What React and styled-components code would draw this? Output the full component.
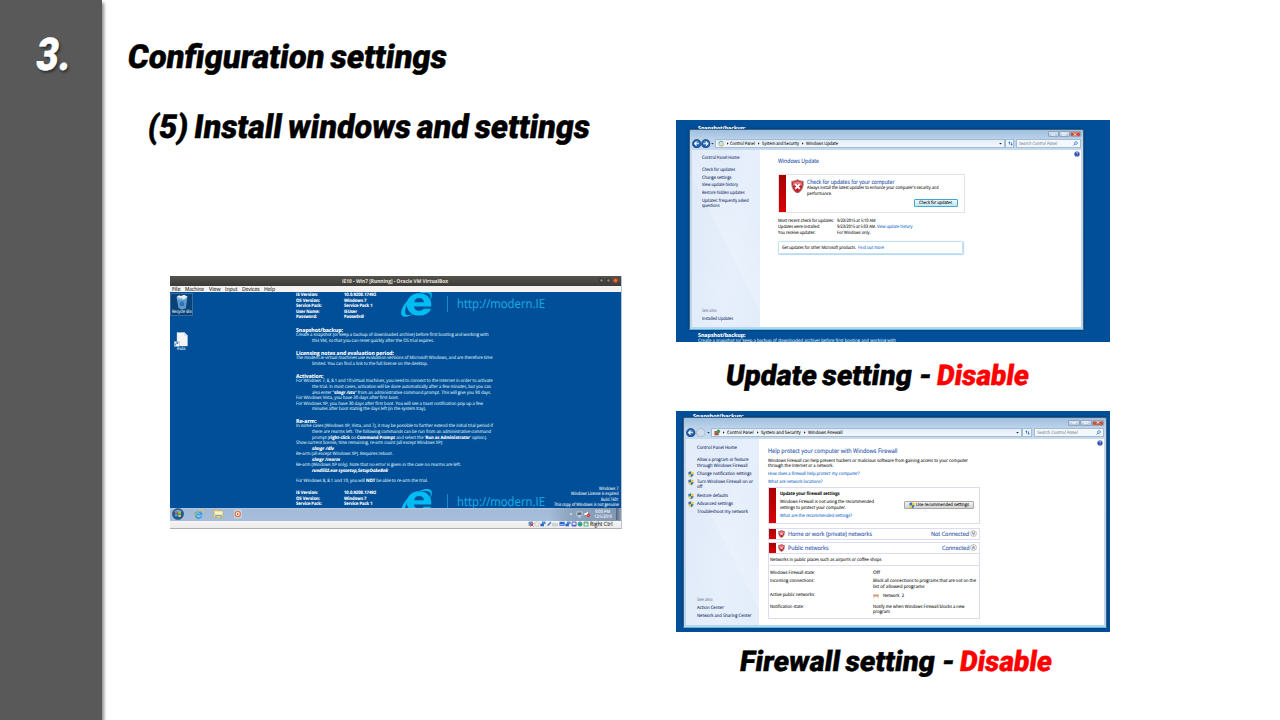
import React, { useLayoutEffect, useRef, useState } from "react";
import styled, { createGlobalStyle, css } from "styled-components";

const GlobalStyle = createGlobalStyle`
  *, *::before, *::after { box-sizing: border-box; }
  html, body { margin: 0; padding: 0; background: #fff; overflow: hidden; }
  svg { display: block; flex: none; }
`;

/* ---------- text fitted to a given width ---------- */

const FitBox = styled.span`
  display: block;
  flex: none;
  width: ${(p) => p.$w}px;
  margin-left: ${(p) => p.$ml || 0}px;
  white-space: nowrap;
  color: ${(p) => p.$color || "inherit"};
  font-weight: ${(p) => (p.$bold ? 700 : "inherit")};
  font-style: ${(p) => (p.$italic ? "italic" : "inherit")};
`;

const FitInner = styled.span`
  display: inline-block;
  transform-origin: 0 50%;
  white-space: pre;
`;

function Fit({ w, ml, color, bold, italic, skew = 0, children }) {
  const ref = useRef(null);
  const [scale, setScale] = useState(1);
  useLayoutEffect(() => {
    const el = ref.current;
    const before = el.style.transform;
    el.style.transform = "none";
    const natural = el.getBoundingClientRect().width;
    el.style.transform = before;
    if (natural > 0) setScale(w / natural);
  }, [w]);
  const slant = skew ? `skewX(${-skew}deg) ` : "";
  return (
    <FitBox $w={w} $ml={ml} $color={color} $bold={bold} $italic={italic}>
      <FitInner ref={ref} style={{ transform: `${slant}scaleX(${scale})` }}>
        {children}
      </FitInner>
    </FitBox>
  );
}

const Line = styled.div`
  display: flex;
  flex: none;
  align-items: center;
  height: 5.5px;
  line-height: 5.5px;
  margin-top: ${(p) => p.$gap || 0}px;
  padding-top: 1.6px;
  padding-left: ${(p) => p.$indent || 0}px;
  font-size: ${(p) => p.$size || 4.6}px;
  color: ${(p) => p.$color || "inherit"};
`;

/* ---------- slide ---------- */

const Slide = styled.div`
  display: flex;
  width: 1280px;
  height: 720px;
  overflow: hidden;
  background: #fff;
  font-family: "Open Sans", "Noto Sans", sans-serif;
  text-rendering: geometricPrecision;
  -webkit-text-stroke: 0.1px currentColor;
`;

const SideBand = styled.aside`
  flex: none;
  width: 102px;
  height: 720px;
  padding: 28px 0 0 37px;
  background: #595959;
  box-shadow: 2px 3px 3px rgba(0, 0, 0, 0.45);
`;

const display = css`
  font-family: Roboto, Inter, sans-serif;
  font-weight: 900;
  word-spacing: -0.06em;
  -webkit-text-stroke: 0.4px currentColor;
`;

const SlideNumber = styled.div`
  ${display}
  height: 53px;
  line-height: 53px;
  font-size: 45px;
  color: #fff;
  text-shadow: 2px 2px 3px rgba(0, 0, 0, 0.55);
`;

const Content = styled.main`
  display: flex;
  width: 1178px;
`;

const LeftColumn = styled.section`
  flex: none;
  width: 574px;
  padding: 38px 0 0 26px;
`;

const RightColumn = styled.section`
  display: flex;
  flex-direction: column;
  width: 434px;
  padding-top: 120px;
`;

const Title = styled.h1`
  ${display}
  height: 40px;
  line-height: 40px;
  margin: ${(p) => p.$top || 0}px 0 0 ${(p) => p.$left || 0}px;
  font-size: 33px;
  color: #000;
`;

const Caption = styled.div`
  ${display}
  display: flex;
  flex: none;
  height: 34px;
  line-height: 34px;
  margin: ${(p) => p.$top}px 0 ${(p) => p.$bottom || 0}px;
  padding-left: ${(p) => p.$left}px;
  font-size: 28.5px;
  color: #000;
`;

/* ---------- virtual machine window ---------- */

const VmWindow = styled.div`
  width: 451.5px;
  height: 253px;
  margin: 128px 0 0 42px;
  background: #f2f1f0;
  border-right: 0.5px solid #b9c4d4;
`;

const VmTitle = styled.div`
  display: flex;
  align-items: center;
  height: 9.5px;
  padding: 0 3px 0 172px;
  background: linear-gradient(#55534c, #3c3b37);
  color: #dfdbd2;
  font-size: 5.3px;
  line-height: 8px;
`;

const VmButtons = styled.div`
  display: flex;
  gap: 1.6px;
  margin-left: auto;
`;

const VmButton = styled.i`
  width: 5px;
  height: 5px;
  border-radius: 50%;
  border: 0.5px solid ${(p) => (p.$hot ? "#c8401c" : "#2f2e2b")};
  background: ${(p) => (p.$hot ? "#ee6b40" : "#7d7a72")};
`;

const VmMenu = styled.div`
  display: flex;
  align-items: center;
  height: 6.5px;
  padding-left: 2.3px;
  background: #f4f3f2;
  color: #2c2c2c;
  font-size: 5.7px;
  line-height: 6px;
`;

const Desktop = styled.div`
  position: relative;
  display: flex;
  height: 216px;
  overflow: hidden;
  background: #004f98;
  color: #cfe0f0;
`;

const IconColumn = styled.div`
  flex: none;
  width: 125.5px;
  padding-top: 1px;
`;

const DesktopIcon = styled.div`
  display: flex;
  flex-direction: column;
  align-items: center;
  width: 23px;
  height: 23px;
  margin-top: ${(p) => p.$top || 0}px;
  padding-top: 0.5px;
  outline: 1px solid ${(p) => (p.$selected ? "rgba(111, 152, 191, 0.5)" : "transparent")};
  outline-offset: -1px;
  background: ${(p) => (p.$selected ? "rgba(30, 40, 60, 0.35)" : "transparent")};
  font-size: 4.6px;
  line-height: 5px;
  color: #dfe8f2;
`;

const WallText = styled.div`
  width: 210px;
  padding-top: 0.6px;
`;

const Brand = styled.div`
  position: absolute;
  left: 231px;
  top: ${(p) => p.$top}px;
  display: flex;
  align-items: center;
  color: #18abe2;
  font-size: 12.4px;
  line-height: 14px;
`;

const BrandRule = styled.i`
  width: 1px;
  height: 16px;
  margin: 0 9px 0 15px;
  background: #1689c6;
`;

const Watermark = styled.div`
  position: absolute;
  right: 2px;
  bottom: 0;
  display: flex;
  flex-direction: column;
  align-items: flex-end;
  color: #e3edf6;
`;

const Taskbar = styled.div`
  display: flex;
  align-items: center;
  height: 12.5px;
  padding-left: 2px;
  background: linear-gradient(#b4c9e2, #a3bbd7 15%, #a6bedb);
`;

const TaskIcons = styled.div`
  display: flex;
  align-items: center;
  gap: 9px;
`;

const Tray = styled.div`
  display: flex;
  align-items: center;
  gap: 3px;
  height: 100%;
  width: 72px;
  margin-left: auto;
  padding-left: 20px;
  background: linear-gradient(90deg, rgba(120, 142, 170, 0), #8da3bd 30%, #8197b2);
`;

const Clock = styled.div`
  display: flex;
  flex-direction: column;
  align-items: center;
  color: #f3f6fa;
`;

const ShowDesktop = styled.i`
  width: 5px;
  height: 12px;
  margin-left: auto;
  background: linear-gradient(90deg, #52677f, #8fa3b8);
`;

const StatusBar = styled.div`
  display: flex;
  align-items: center;
  justify-content: flex-end;
  gap: 0px;
  height: 8.5px;
  padding-right: 8px;
  border-bottom: 1px solid #b3b0ab;
  background: linear-gradient(#f6f5f4, #edebe9);
  color: #222;
  font-size: 5.8px;
  line-height: 7px;
`;

const IeLogo = () => (
  <svg width="31" height="26" viewBox="0 0 31 26">
    <path fillRule="evenodd" d="M30.300 15.400H13c.2 2.800 2.400 4.300 5.200 4.300 2.300 0 3.600-.7 4.600-2h7.100C28.600 22 24 24.600 18.300 24.600 11 24.600 5.800 20 5.800 13.400 5.800 7 11.200 2.300 18.200 2.300c7.600 0 12.600 5 12.100 13.100zM13.200 11.200h9.800c-.3-2.600-2.200-4.100-4.800-4.100-2.800 0-4.600 1.600-5 4.100z" fill="#00bcf2" />
    <path d="M12 5C4 10-1.500 20 .6 24c1.900 3.500 8 1.300 12.400-1.500-3.800 1.700-7.300 2.200-8.400.2C3 19.500 6 11 12 5zM18 2.300C23.500-.6 28.500-.7 30.200 1.500c1.200 2 .5 4.900-.8 8-.4-2 1-4.700-.6-6.300C27 1.600 22 2 18 2.300z" fill="#00bcf2" />
  </svg>
);

const RecycleBin = () => (
  <svg width="14" height="16" viewBox="0 0 14 16">
    <path d="M1.500 3 12.500 2.500 10.800 14.500 6.500 15.500 3.500 14z" fill="#6fa9d8" opacity=".85" />
    <path d="M1.500 3 4 1.200 6 2 9 .8l3.500 1.700L9 5z" fill="#e6eef5" />
    <path d="M2 4.500 9 5.500l3-2" stroke="#b9daf0" fill="none" strokeWidth=".7" />
    <path d="M5 9.500 6.800 7.500l2 1.500-.5 2.500H5.500z" fill="#2f76c4" stroke="#1d64b4" strokeWidth=".8" />
  </svg>
);

const FileIcon = () => (
  <svg width="15" height="15" viewBox="0 0 15 15">
    <path d="M3 .5h7.500l3 3v10.500H3z" fill="#f3f5f8" stroke="#cdd5de" strokeWidth=".4" />
    <path d="M10.500.5v3h3z" fill="#c5d0db" />
    <rect x=".3" y="9.500" width="5" height="5" fill="#f7fafd" stroke="#7f9ab4" strokeWidth=".4" />
    <path d="M1.300 13.500c0-2 .8-2.600 2-2.600M2.600 9.900l1.500 1-1 1.300" fill="none" stroke="#1a57b0" strokeWidth=".8" />
  </svg>
);

const StartOrb = () => (
  <svg width="12" height="12" viewBox="0 0 12 12">
    <circle cx="6" cy="6" r="5.600" fill="#1d5a96" stroke="#204a74" strokeWidth=".5" />
    <path d="M2 3.500Q6 0 10 3.500 6 5.500 2 3.500z" fill="#9dc7e6" opacity=".7" />
    <path d="M3 3.600q1.500-.8 2.700-.1v2.200q-1.300-.6-2.900.1z" fill="#ee5b2f" />
    <path d="M6.200 3.700q1.500.7 2.900 0l-.2 2.200q-1.300.6-2.700-.1z" fill="#8dc63f" />
    <path d="M2.800 6.300q1.500-.7 2.900 0v2.300q-1.300-.6-2.700.1z" fill="#3aa5e8" />
    <path d="M6.200 6.400q1.400.7 2.800 0l-.2 2.300q-1.300.5-2.600-.1z" fill="#ffc928" />
  </svg>
);

const TaskIe = () => (
  <svg width="11" height="11" viewBox="0 0 11 11">
    <path d="M8.500 7.200A3.200 3.200 0 1 1 8.700 5.500H3" fill="none" stroke="#35a3e8" strokeWidth="1.700" />
    <path d="M1.500 9.800C-.5 8 5 1 9.500 1c1.300.3.600 2 0 2.800" fill="none" stroke="#f0c543" strokeWidth=".9" />
  </svg>
);

const TaskFolder = () => (
  <svg width="11" height="10" viewBox="0 0 11 10">
    <path d="M.7 1h3.500l.8 1h5v7H.7z" fill="#ecd27a" stroke="#c7a54b" strokeWidth=".4" />
    <path d="M2 2.500h7.500v3H2z" fill="#fff3c2" />
    <path d="M3 9V6.500h5V9" fill="none" stroke="#63aee0" strokeWidth="1.200" />
  </svg>
);

const TaskPlayer = () => (
  <svg width="10" height="10" viewBox="0 0 10 10">
    <rect x="1" y=".5" width="8" height="9" rx="1" fill="#bcd2ea" />
    <circle cx="4.800" cy="5" r="3.100" fill="#ea6a22" />
    <circle cx="4.800" cy="5" r="2" fill="#fff" />
    <path d="M4 3.700v2.600L6.300 5z" fill="#e2550d" />
  </svg>
);

const TrayIcons = () => (
  <svg width="22" height="8" viewBox="0 0 22 8">
    <path d="M.5 4.500 2 3l1.500 1.500z" fill="#fff" />
    <rect x="8" y="2" width="5" height="3.500" fill="#5c6f84" stroke="#eef2f6" strokeWidth=".6" />
    <path d="M10.500 5.500V7M9 7h3" stroke="#eef2f6" strokeWidth=".6" />
    <path d="M15.500 3H17l2-1.500v5L17 5h-1.500z" fill="#fff" />
    <circle cx="19.300" cy="5.300" r="1.700" fill="#de2f27" />
    <path d="m18.500 4.500 1.600 1.600" stroke="#fff" strokeWidth=".5" />
  </svg>
);

const StatusGlyph = ({ kind }) => (
  <svg width="6.100" height="6" viewBox="0 0 6 6">
    {kind === 0 && <><rect x=".5" y=".6" width="4.500" height="4.500" rx="1" fill="#6f8fc2" /><path d="m2.500 2.500 3 3m0-3-3 3" stroke="#df3a2b" strokeWidth=".9" /></>}
    {kind === 1 && <circle cx="3" cy="3" r="2.300" fill="#eee" stroke="#bbb" strokeWidth=".7" />}
    {kind === 2 && <><rect x="1.800" y=".5" width="3.800" height="2.600" fill="#4b8ee0" /><rect x=".4" y="2.700" width="3.500" height="2.600" fill="#2965c8" /></>}
    {kind === 3 && <path d="m.8 5 1-2 2.500-2.500L5.500 2 3 4.500z" fill="#4d93dd" />}
    {kind === 4 && <path d="M.5 2h2l.5.600h2.500V5h-5z" fill="#d5d9df" stroke="#a9b2bd" strokeWidth=".4" />}
    {kind === 5 && <><rect x=".4" y=".8" width="5.200" height="4" fill="#2c68cf" /><rect x="1" y="3.200" width="4" height=".9" fill="#a4cbff" /></>}
    {kind === 6 && <><rect x=".5" y=".6" width="5" height="4.800" rx=".8" fill="#5560c9" /><rect x="1.500" y="1.500" width="3" height="2.300" fill="#e5e8ff" /></>}
    {kind === 7 && <><circle cx="3" cy="3" r="2.500" fill="#49a6dd" /><path d="M3 .8v4M1.500 3.200 3 5l1.500-1.800z" stroke="#33a038" fill="#33a038" strokeWidth=".8" /></>}
    {kind === 8 && <><rect x=".5" y=".5" width="5" height="5" rx=".6" fill="#61b58b" /><path d="M3 1.200v3M1.700 3 3 4.700 4.300 3z" stroke="#fff" fill="#fff" strokeWidth=".5" /></>}
  </svg>
);

const versionRows = [
  ["IE Version:", 22, "10.0.9200.17492", 32],
  ["OS Version:", 24, "Windows 7", 22.500],
  ["Service Pack:", 26, "Service Pack 1", 28.500],
  ["User Name:", 23.500, "IEUser", 13],
  ["Password:", 21, "Passw0rd!", 20],
];

function VersionRows({ count, gap }) {
  return versionRows.slice(0, count).map(([label, lw, value, vw], i) => (
    <Line key={label} $gap={i === 0 ? gap : 0} $color="#fff">
      <Fit w={lw} bold>{label}</Fit>
      <Fit w={vw} ml={48 - lw} bold>{value}</Fit>
    </Line>
  ));
}

const B = styled.b`
  color: #fff;
  font-style: ${(p) => (p.$i ? "italic" : "normal")};
`;

const wallLines = [
  { head: "Snapshot/backup:", w: 47, gap: 7 },
  { t: "Create a snapshot (or keep a backup of downloaded archive) before first booting and working with", w: 192.5 },
  { t: "this VM, so that you can reset quickly after the OS trial expires.", w: 122, indent: 16 },
  { head: "Licensing notes and evaluation period:", w: 98, gap: 6.3 },
  { t: "The modern.ie virtual machines use evaluation versions of Microsoft Windows, and are therefore time", w: 196.5 },
  { t: "limited. You can find a link to the full license on the desktop.", w: 116, indent: 16 },
  { head: "Activation:", w: 27.5, gap: 6.3 },
  { t: "For Windows 7, 8, 8.1 and 10 virtual machines, you need to connect to the Internet in order to activate", w: 196.5 },
  { t: "the trial. In most cases, activation will be done automatically after a few minutes, but you can", w: 179, indent: 16 },
  { t: <>also enter "<B $i>slmgr /ato</B>" from an administrative command prompt. This will give you 90 days.</>, w: 179, indent: 16 },
  { t: "For Windows Vista, you have 30 days after first boot.", w: 103 },
  { t: "For Windows XP, you have 30 days after first boot. You will see a toast notification pop up a few", w: 187 },
  { t: "minutes after boot stating the days left (in the system tray).", w: 114, indent: 16 },
  { head: "Re-arm:", w: 20.5, gap: 6 },
  { t: "In some cases (Windows XP, Vista, and 7), it may be possible to further extend the initial trial period if", w: 197 },
  { t: "there are rearms left. The following commands can be run from an administrative command", w: 179, indent: 16 },
  { t: <>prompt (<B>right-click</B> on <B>Command Prompt</B> and select the '<B>Run as Administrator</B>' option).</>, w: 175, indent: 16 },
  { t: "Show current license, time remaining, re-arm count (all except Windows XP):", w: 147 },
  { t: <B $i>slmgr /dlv</B>, w: 22, indent: 16 },
  { t: "Re-arm (all except Windows XP). Requires reboot.", w: 97 },
  { t: <B $i>slmgr /rearm</B>, w: 28, indent: 16 },
  { t: "Re-arm (Windows XP only). Note that no error is given in the case no rearms are left.", w: 165 },
  { t: <B $i>rundll32.exe syssetup,SetupOobeBnk</B>, w: 76, indent: 16 },
  { t: <>For Windows 8, 8.1 and 10, you will <B>NOT</B> be able to re-arm the trial.</>, w: 132, gap: 5 },
];

function VirtualMachine() {
  return (
    <VmWindow>
      <VmTitle>
        <Fit w={106} bold>IE10 - Win7 [Running] - Oracle VM VirtualBox</Fit>
        <VmButtons><VmButton /><VmButton /><VmButton $hot /></VmButtons>
      </VmTitle>
      <VmMenu>
        <Fit w={8.5}>File</Fit>
        <Fit w={19} ml={4.5}>Machine</Fit>
        <Fit w={11.5} ml={4.5}>View</Fit>
        <Fit w={12.5} ml={4.5}>Input</Fit>
        <Fit w={17.5} ml={4.5}>Devices</Fit>
        <Fit w={11} ml={4.5}>Help</Fit>
      </VmMenu>
      <Desktop>
        <IconColumn>
          <DesktopIcon $selected><RecycleBin /><Fit w={20}>Recycle Bin</Fit></DesktopIcon>
          <DesktopIcon $top={15}><FileIcon /><Fit w={8.500}>eula</Fit></DesktopIcon>
        </IconColumn>
        <WallText>
          <VersionRows count={5} gap={0} />
          {wallLines.map((l, i) => (
            <Line key={i} $gap={l.gap || 0.08} $indent={l.indent} $size={l.head ? 5.4 : 4.6} $color={l.head ? "#fff" : undefined}>
              <Fit w={l.w} bold={!!l.head}>{l.head || l.t}</Fit>
            </Line>
          ))}
          <VersionRows count={3} gap={6.2} />
        </WallText>
        <Brand $top={-1}><IeLogo /><BrandRule /><Fit w={88}>http://modern.IE</Fit></Brand>
        <Brand $top={197}><IeLogo /><BrandRule /><Fit w={88}>http://modern.IE</Fit></Brand>
        <Watermark>
          <Line><Fit w={19.5}>Windows 7</Fit></Line>
          <Line><Fit w={47.5}>Windows License is expired</Fit></Line>
          <Line><Fit w={17.5}>Build 7601</Fit></Line>
          <Line><Fit w={65}>This copy of Windows is not genuine</Fit></Line>
        </Watermark>
      </Desktop>
      <Taskbar>
        <TaskIcons><StartOrb /><TaskIe /><TaskFolder /><TaskPlayer /></TaskIcons>
        <Tray>
          <TrayIcons />
          <Clock>
            <Line><Fit w={15}>9:00 PM</Fit></Line>
            <Line><Fit w={18}>12/5/2019</Fit></Line>
          </Clock>
          <ShowDesktop />
        </Tray>
      </Taskbar>
      <StatusBar>
        {[0, 1, 2, 3, 4, 5, 2, 6, 7, 8].map((k, i) => <StatusGlyph key={i} kind={k} />)}
        <Fit w={22.5} ml={1}>Right Ctrl</Fit>
      </StatusBar>
    </VmWindow>
  );
}

/* ---------- control panel screens ---------- */

const Screen = styled.div`
  display: flex;
  flex-direction: column;
  flex: none;
  width: 434px;
  height: ${(p) => p.$h}px;
  padding: ${(p) => p.$pad};
  overflow: hidden;
  background: #004f98;
  color: #d7e4f1;
`;

const Peek = styled.div`
  flex: none;
  height: ${(p) => p.$h}px;
  padding: ${(p) => p.$pad};
  overflow: hidden;
`;

const Glass = styled.div`
  display: flex;
  flex-direction: column;
  flex: none;
  width: ${(p) => p.$w}px;
  height: ${(p) => p.$h}px;
  padding: 0 2px 2px;
  border: 0.7px solid #3c5f80;
  border-bottom-color: #57c0dc;
  border-radius: 2px 2px 0 0;
  background: linear-gradient(#9fc0df 0, #bdd3ea 10px, #c6daee 20px, #bcd5ec);
  box-shadow: 0 0 2px rgba(0, 20, 50, 0.5);
  color: #222;
`;

const WinButtons = styled.div`
  display: flex;
  justify-content: flex-end;
  flex: none;
  height: ${(p) => p.$h}px;
  padding-top: 1.500px;
`;

const WinButton = styled.i`
  display: flex;
  align-items: center;
  justify-content: center;
  width: ${(p) => p.$w}px;
  height: 6px;
  border: 0.5px solid #8fa6bf;
  border-radius: 0 0 1px 1px;
  background: ${(p) => (p.$close ? "linear-gradient(#dd9585, #c0402a 50%, #d4694f)" : "linear-gradient(#d9e5f1, #b0c5dc)")};
`;

const AddressRow = styled.div`
  display: flex;
  align-items: center;
  flex: none;
  height: 11px;
  padding-bottom: 1px;
`;

const Field = styled.div`
  display: flex;
  align-items: center;
  flex: none;
  width: ${(p) => p.$w}px;
  height: 8.500px;
  margin-left: ${(p) => p.$ml || 0}px;
  padding: 0.8px 2px 0;
  border: 0.5px solid #a3bbd3;
  background: ${(p) => p.$bg || "#eef4fb"};
  font-size: 4.5px;
  line-height: 6px;
`;

const Body = styled.div`
  display: flex;
  flex: 1;
  min-height: 0;
  background: #fff;
`;

const SidePane = styled.nav`
  flex: none;
  display: flex;
  flex-direction: column;
  width: ${(p) => p.$w}px;
  padding: ${(p) => p.$pad};
  background:
    linear-gradient(63deg, transparent 48%, rgba(255, 255, 255, 0.18) 48.5%, transparent 75%),
    linear-gradient(100deg, #dfe9f8, #e6effb 60%, #e3edfa);
  color: #23346c;
`;

const MainPane = styled.div`
  flex: 1;
  padding: ${(p) => p.$pad};
  color: #1c1c1c;
`;

const HelpSlot = styled.div`
  flex: none;
  width: 7px;
  padding-top: 1px;
`;

const AlertCard = styled.div`
  display: flex;
  width: ${(p) => p.$w}px;
  height: ${(p) => p.$h}px;
  margin-top: ${(p) => p.$top}px;
  border: 1px solid ${(p) => p.$line || "#e2e2e6"};
`;

const RedStrip = styled.i`
  flex: none;
  width: 7px;
  background: linear-gradient(#a80000, #d90000);
`;

const CardText = styled.div`
  padding: ${(p) => p.$pad};
`;

const CardShield = styled.div`
  flex: none;
  padding: 4px 3.500px 0 5px;
`;

const PushButton = styled.div`
  display: flex;
  align-items: center;
  justify-content: center;
  width: ${(p) => p.$w}px;
  height: 7.500px;
  margin: ${(p) => p.$m};
  padding-top: 0.5px;
  border: ${(p) => (p.$focus ? "1px solid #3fa9cf" : "0.7px solid #a8a8a8")};
  border-radius: 1px;
  background: ${(p) => (p.$focus ? "linear-gradient(#eef9fd, #c5e5f3)" : "linear-gradient(#f3f3f3, #d3d3d3)")};
  font-size: 4.5px;
  line-height: 5px;
  color: #111;
`;

const PromoBox = styled.div`
  display: flex;
  align-items: center;
  width: 185px;
  height: 13px;
  margin-top: 5px;
  padding: 1px 0 0 3.500px;
  border: 1px solid #c3e1f4;
  border-radius: 1.500px;
  box-shadow: 0.5px 0.5px 1px #b5d6ec;
  font-size: 4.6px;
  line-height: 6px;
`;

const SideItem = styled.div`
  display: flex;
  align-items: center;
  height: 5.500px;
  margin-top: ${(p) => p.$gap || 0}px;
  margin-left: ${(p) => (p.$shield ? -8.500 : 0)}px;
  padding-top: 2px;
  gap: 2.500px;
  font-size: 4.6px;
  line-height: 5.500px;
  color: ${(p) => p.$color || "inherit"};
`;

const Grow = styled.div`
  flex: 1;
`;

const NetworkHead = styled.div`
  display: flex;
  align-items: center;
  width: 212px;
  height: 12px;
  margin-top: ${(p) => p.$top}px;
  border: 1px solid #dcdcf0;
  font-size: 5.800px;
  line-height: 8px;
  color: #2a50a8;
`;

const NetworkStrip = styled(RedStrip)`
  height: 10px;
  margin-right: 2.500px;
`;

const NetworkDetails = styled.div`
  width: 212px;
  height: 65px;
  border: 1px solid #dcdcf0;
  border-top: 0;
`;

const NetworkNote = styled.div`
  height: 12.500px;
  padding: 3.500px 0 0 1.500px;
  border-bottom: 1px solid #dcdcf0;
`;

const DetailRow = styled.div`
  display: grid;
  grid-template-columns: 103px 1fr;
  margin-top: ${(p) => p.$gap}px;
  padding-left: 1.500px;
`;

const NavButton = ({ off }) => (
  <svg width="9.500" height="9.500" viewBox="0 0 10 10">
    <circle cx="5" cy="5" r="4.500" fill={off ? "#cfdceb" : "#1d5cab"} stroke={off ? "#96a9be" : "#173f78"} strokeWidth=".7" />
    {!off && <path d="M2 4Q5-.3 8 4z" fill="#83b7e5" opacity=".7" />}
    {!off && <path d="M7.600 5H3M4.800 3 2.800 5l2 2" fill="none" stroke="#fff" strokeWidth="1.200" />}
  </svg>
);

const Flip = styled.span`
  display: flex;
  transform: ${(p) => (p.$on ? "scaleX(-1)" : "none")};
`;

const Triangle = ({ down, c = "#222" }) => (
  <svg width="3" height="3" viewBox="0 0 3 3">
    <path d={down ? "M.2.900h2.600L1.500 2.500z" : "M1 .2v2.600L2.500 1.500z"} fill={c} />
  </svg>
);

const Slot = styled.span`
  display: flex;
  flex: none;
  justify-content: center;
  width: ${(p) => p.$w}px;
`;

const ErrorShield = ({ s }) => (
  <svg width={s} height={s * 1.15} viewBox="0 0 14 16">
    <path d="M7 .5C9 1.800 11 2.300 13.300 2.300c.5 6-1.300 10.700-6.300 13.200C2 13 .2 8.300.7 2.300 3 2.300 5 1.800 7 .5z" fill="#c5202a" stroke="#a7a9ad" strokeWidth="1" />
    <path d="M7 2c-1.500 1-3 1.400-4.800 1.500 0 1.500 0 2.500.3 4Q7 4 11.500 7.500c.3-1.500.3-2.500.3-4C10 3.400 8.500 3 7 2z" fill="#e5777a" />
    <path d="m4.500 5.500 5 5m0-5-5 5" stroke="#fff" strokeWidth="2" />
  </svg>
);

const UacShield = () => (
  <svg width="6" height="6.500" viewBox="0 0 12 13">
    <path d="M6 .5Q8.500 2 11.300 2C11.600 7.500 9.500 11 6 12.600z" fill="#f4cb34" />
    <path d="M6 .5Q3.500 2 .7 2C.4 7.500 2.500 11 6 12.600z" fill="#2f74c8" />
    <path d="M.8 6.300H6v6.300C3 11.200 1.200 9 .8 6.300z" fill="#f4cb34" />
    <path d="M11.200 6.300H6v6.300c3-1.400 4.800-3.600 5.200-6.300z" fill="#2f74c8" />
  </svg>
);

const HelpIcon = () => (
  <svg width="6" height="6" viewBox="0 0 6 6">
    <circle cx="3" cy="3" r="2.600" fill="#2645a8" stroke="#8a9cc9" strokeWidth=".4" />
    <path d="M2.100 2.300Q2.200 1.400 3 1.400q.9 0 .9.800Q3.900 2.700 3 3.200v.4M3 4.200v.5" fill="none" stroke="#fff" strokeWidth=".6" />
  </svg>
);

const SearchIcon = () => (
  <svg width="5" height="5" viewBox="0 0 5 5">
    <circle cx="3" cy="2" r="1.400" fill="none" stroke="#3572bd" strokeWidth=".7" />
    <path d="M2 3 .5 4.600" stroke="#3572bd" strokeWidth=".8" />
  </svg>
);

const RefreshIcon = () => (
  <svg width="5" height="5" viewBox="0 0 5 5">
    <path d="M.2 1.700 1.400.3l1.200 1.400h-.8V3.500H1V1.700zM2.400 3.300h.8V1.500H4v1.800h.8L3.600 4.700z" fill="#2f74c8" />
  </svg>
);

const UpdateIcon = () => (
  <svg width="6.500" height="7" viewBox="0 0 7 7">
    <rect x=".8" y=".8" width="5" height="5.500" rx="1" fill="#d5e5ef" stroke="#8fb3c9" strokeWidth=".4" />
    <path d="M1.200 3.500A2.300 2.300 0 0 1 5.500 2.500" fill="none" stroke="#4aa84e" strokeWidth=".9" />
    <path d="M5.800 3.500A2.300 2.300 0 0 1 1.500 4.800" fill="none" stroke="#dfae37" strokeWidth=".9" />
  </svg>
);

const FirewallIcon = () => (
  <svg width="6.500" height="7" viewBox="0 0 7 7">
    <rect x=".5" y="2" width="4.500" height="4.500" fill="#a8382a" />
    <path d="M.5 3.500H5M.5 5H5M2.500 2v1.500M1.500 3.500V5" stroke="#e3b8a8" strokeWidth=".3" />
    <circle cx="4.700" cy="2.300" r="1.900" fill="#3f9a55" />
  </svg>
);

const BenchIcon = () => (
  <svg width="6" height="5" viewBox="0 0 6 5">
    <path d="M.2.500h5.600v1.300H.2z" fill="#d08a50" />
    <path d="M1 1.800V4.500M5 1.800V4.500M.3 2.500h5.400" stroke="#c98a64" strokeWidth=".5" />
  </svg>
);

const Chevron = ({ up }) => (
  <svg width="7" height="7" viewBox="0 0 7 7">
    <circle cx="3.500" cy="3.500" r="3" fill="#f5f5f5" stroke="#8d8d8d" strokeWidth=".5" />
    <path d={up ? "M2.200 3.500 3.500 2.300l1.300 1.200M2.200 5 3.500 3.800 4.800 5" : "M2.200 2 3.500 3.200 4.800 2M2.200 3.500l1.300 1.200 1.300-1.200"} fill="none" stroke="#333" strokeWidth=".6" />
  </svg>
);

function WindowButtons({ h, w }) {
  return (
    <WinButtons $h={h}>
      <WinButton $w={w}><svg width="4" height="3" viewBox="0 0 4 3"><path d="M.3 2h3.400" stroke="#fff" /></svg></WinButton>
      <WinButton $w={w}><svg width="4" height="3" viewBox="0 0 4 3"><rect x=".6" y=".4" width="2.800" height="2.200" fill="none" stroke="#fff" strokeWidth=".6" /></svg></WinButton>
      <WinButton $w={w} $close><svg width="4" height="3" viewBox="0 0 4 3"><path d="m.8.300 2.400 2.400m0-2.400L.8 2.700" stroke="#fff" strokeWidth=".9" /></svg></WinButton>
    </WinButtons>
  );
}

const BLUE = "#1c50a8";
const LINK = "#1f70cf";

function UpdateWindow() {
  return (
    <Screen $h={222} $pad="0 0 0 12.500px">
      <Peek $h={8.5} $pad="5px 0 0 9px">
        <Line $size={5.4} $color="#fff"><Fit w={47.5} bold>Snapshot/backup:</Fit></Line>
      </Peek>
      <Glass $w={395} $h={201}>
        <WindowButtons h={9} w={11} />
        <AddressRow>
          <NavButton />
          <Flip $on><NavButton /></Flip>
          <Slot $w={4.500}><Triangle down c="#245" /></Slot>
          <Field $w={289.5} $bg="linear-gradient(#e3edf8,#f2f7fc)">
            <UpdateIcon />
            <Slot $w={5}><Triangle /></Slot>
            <Fit w={25}>Control Panel</Fit>
            <Slot $w={7.500}><Triangle /></Slot>
            <Fit w={37}>System and Security</Fit>
            <Slot $w={7}><Triangle /></Slot>
            <Fit w={32}>Windows Update</Fit>
            <Grow />
            <Triangle down />
          </Field>
          <Field $w={9} $ml={0.500}><RefreshIcon /></Field>
          <Field $w={64.5} $ml={2.200} $bg="#f4f8fc">
            <Fit w={38} italic color="#8794a3">Search Control Panel</Fit>
            <Grow />
            <SearchIcon />
          </Field>
        </AddressRow>
        <Body>
          <SidePane $w={68} $pad="5.300px 0 5.500px 10.200px">
            <SideItem><Fit w={37.5}>Control Panel Home</Fit></SideItem>
            <SideItem $gap={6.3}><Fit w={33}>Check for updates</Fit></SideItem>
            <SideItem $gap={2.5}><Fit w={29.5}>Change settings</Fit></SideItem>
            <SideItem $gap={2.4}><Fit w={36}>View update history</Fit></SideItem>
            <SideItem $gap={2.3}><Fit w={42.5}>Restore hidden updates</Fit></SideItem>
            <SideItem $gap={2}><Fit w={46.5}>Updates: frequently asked</Fit></SideItem>
            <SideItem><Fit w={17.5}>questions</Fit></SideItem>
            <Grow />
            <SideItem $color="#7c8796"><Fit w={14.5}>See also</Fit></SideItem>
            <SideItem $gap={2.5}><Fit w={31}>Installed Updates</Fit></SideItem>
          </SidePane>
          <MainPane $pad="8.500px 0 0 18.200px">
            <Line $size={5.8} $color={BLUE}><Fit w={41}>Windows Update</Fit></Line>
            <AlertCard $w={187} $h={39} $top={10}>
              <RedStrip />
              <CardShield><ErrorShield s={13} /></CardShield>
              <CardText $pad="4.500px 0 0 0">
                <Line $size={5.8} $color={BLUE}><Fit w={87.5}>Check for updates for your computer</Fit></Line>
                <Line $gap={1.2}><Fit w={131.5}>Always install the latest updates to enhance your computer's security and</Fit></Line>
                <Line><Fit w={25}>performance.</Fit></Line>
                <PushButton $w={43.5} $m="2.500px 0 0 107px" $focus><Fit w={33}>Check for updates</Fit></PushButton>
              </CardText>
            </AlertCard>
            <Line $gap={5.8}><Fit w={56}>Most recent check for updates:</Fit><Fit w={38.5} ml={3}>9/23/2015 at 5:10 AM</Fit></Line>
            <Line $gap={0.6}><Fit w={42}>Updates were installed:</Fit><Fit w={39} ml={17}>9/23/2015 at 5:03 AM.</Fit><Fit w={35.500} ml={1.500} color={LINK}>View update history</Fit></Line>
            <Line $gap={0.6}><Fit w={37.5}>You receive updates:</Fit><Fit w={33.5} ml={21.500}>For Windows only.</Fit></Line>
            <PromoBox><Fit w={74}>Get updates for other Microsoft products.</Fit><Fit w={26} ml={1.500} color={LINK}>Find out more</Fit></PromoBox>
          </MainPane>
          <HelpSlot><HelpIcon /></HelpSlot>
        </Body>
      </Glass>
      <Peek $h={12.5} $pad="3px 0 0 9px">
        <Line $size={5.4} $color="#fff"><Fit w={47.5} bold>Snapshot/backup:</Fit></Line>
        <Line $gap={0.3}><Fit w={198}>Create a snapshot (or keep a backup of downloaded archive) before first booting and working with</Fit></Line>
      </Peek>
    </Screen>
  );
}

function FirewallWindow() {
  return (
    <Screen $h={221} $pad="0 0 0 7px">
      <Peek $h={6} $pad="1.800px 0 0 9.500px">
        <Line $size={5.4} $color="#fff"><Fit w={50.5} bold>Snapshot/backup:</Fit></Line>
      </Peek>
      <Glass $w={423.5} $h={211}>
        <WindowButtons h={9.5} w={12} />
        <AddressRow>
          <NavButton />
          <NavButton off />
          <Slot $w={6}><Triangle down c="#245" /></Slot>
          <Field $w={310.5} $bg="linear-gradient(#e3edf8,#f2f7fc)">
            <FirewallIcon />
            <Slot $w={6}><Triangle /></Slot>
            <Fit w={26.500}>Control Panel</Fit>
            <Slot $w={8}><Triangle /></Slot>
            <Fit w={39.500}>System and Security</Fit>
            <Slot $w={7.500}><Triangle /></Slot>
            <Fit w={34.500}>Windows Firewall</Fit>
            <Grow />
            <Triangle down />
          </Field>
          <Field $w={10} $ml={0.500}><RefreshIcon /></Field>
          <Field $w={70} $ml={2} $bg="#f4f8fc">
            <Fit w={40.5} italic color="#8794a3">Search Control Panel</Fit>
            <Grow />
            <SearchIcon />
          </Field>
        </AddressRow>
        <Body>
          <SidePane $w={72.500} $pad="6px 0 6.500px 10.700px">
            <SideItem><Fit w={40}>Control Panel Home</Fit></SideItem>
            <SideItem $gap={7.2}><Fit w={51.5}>Allow a program or feature</Fit></SideItem>
            <SideItem><Fit w={50.5}>through Windows Firewall</Fit></SideItem>
            <SideItem $shield $gap={2.7}><UacShield /><Fit w={54.5}>Change notification settings</Fit></SideItem>
            <SideItem $shield $gap={2.6}><UacShield /><Fit w={56}>Turn Windows Firewall on or</Fit></SideItem>
            <SideItem><Fit w={5.500}>off</Fit></SideItem>
            <SideItem $shield $gap={2.7}><UacShield /><Fit w={31}>Restore defaults</Fit></SideItem>
            <SideItem $shield $gap={2.8}><UacShield /><Fit w={36}>Advanced settings</Fit></SideItem>
            <SideItem $gap={2.7}><Fit w={51}>Troubleshoot my network</Fit></SideItem>
            <Grow />
            <SideItem $color="#7c8796"><Fit w={15.5}>See also</Fit></SideItem>
            <SideItem $gap={2.5}><Fit w={27}>Action Center</Fit></SideItem>
            <SideItem $gap={2.5}><Fit w={54.5}>Network and Sharing Center</Fit></SideItem>
          </SidePane>
          <MainPane $pad="8.500px 0 0 9.100px">
            <Line $size={6.200} $color={BLUE}><Fit w={129.5}>Help protect your computer with Windows Firewall</Fit></Line>
            <Line $gap={5.5}><Fit w={200}>Windows Firewall can help prevent hackers or malicious software from gaining access to your computer</Fit></Line>
            <Line><Fit w={65.5}>through the Internet or a network.</Fit></Line>
            <Line $gap={2.4} $color={LINK}><Fit w={91.5}>How does a firewall help protect my computer?</Fit></Line>
            <Line $gap={2.3} $color={LINK}><Fit w={54.5}>What are network locations?</Fit></Line>
            <AlertCard $w={212} $h={37} $top={2.2} $line="#dcdcf0">
              <RedStrip />
              <CardText $pad="3px 0 0 4.500px">
                <Line $color="#111"><Fit w={59.5} bold>Update your firewall settings</Fit></Line>
                <Line $gap={3}><Fit w={94}>Windows Firewall is not using the recommended</Fit></Line>
                <Line><Fit w={66}>settings to protect your computer.</Fit></Line>
                <Line $gap={3} $color={LINK}><Fit w={72}>What are the recommended settings?</Fit></Line>
              </CardText>
              <PushButton $w={70} $m="13.500px 0 0 29.500px"><UacShield /><Fit w={53} ml={1}>Use recommended settings</Fit></PushButton>
            </AlertCard>
            <NetworkHead $top={4}>
              <NetworkStrip /><ErrorShield s={7} />
              <Fit w={84} ml={2.700}>Home or work (private) networks</Fit>
              <Grow />
              <Fit w={38}>Not Connected</Fit>
              <Slot $w={9.5}><Chevron /></Slot>
            </NetworkHead>
            <NetworkHead $top={2}>
              <NetworkStrip /><ErrorShield s={7} />
              <Fit w={40.5} ml={2.700}>Public networks</Fit>
              <Grow />
              <Fit w={27.5}>Connected</Fit>
              <Slot $w={9.5}><Chevron up /></Slot>
            </NetworkHead>
            <NetworkDetails>
              <NetworkNote><Line><Fit w={111.5}>Networks in public places such as airports or coffee shops</Fit></Line></NetworkNote>
              <DetailRow $gap={3.8}><Line><Fit w={45}>Windows Firewall state:</Fit></Line><Line><Fit w={7}>Off</Fit></Line></DetailRow>
              <DetailRow $gap={2.9}>
                <Line><Fit w={44.5}>Incoming connections:</Fit></Line>
                <div>
                  <Line><Fit w={103}>Block all connections to programs that are not on the</Fit></Line>
                  <Line><Fit w={51.5}>list of allowed programs</Fit></Line>
                </div>
              </DetailRow>
              <DetailRow $gap={3}>
                <Line><Fit w={45}>Active public networks:</Fit></Line>
                <Line $gap={0.7}><BenchIcon /><Fit w={21} ml={4}>Network  2</Fit></Line>
              </DetailRow>
              <DetailRow $gap={5}>
                <Line><Fit w={34}>Notification state:</Fit></Line>
                <div>
                  <Line><Fit w={91.5}>Notify me when Windows Firewall blocks a new</Fit></Line>
                  <Line><Fit w={17}>program</Fit></Line>
                </div>
              </DetailRow>
            </NetworkDetails>
          </MainPane>
          <HelpSlot><HelpIcon /></HelpSlot>
        </Body>
      </Glass>
    </Screen>
  );
}

export default function App() {
  return (
    <>
      <GlobalStyle />
      <Slide>
        <SideBand>
          <SlideNumber><Fit w={34} skew={8}>3.</Fit></SlideNumber>
        </SideBand>
        <Content>
          <LeftColumn>
            <Title><Fit w={319} skew={8}>Configuration settings</Fit></Title>
            <Title $top={30} $left={20}><Fit w={442} skew={8}>(5) Install windows and settings</Fit></Title>
            <VirtualMachine />
          </LeftColumn>
          <RightColumn>
            <UpdateWindow />
            <Caption $top={17} $left={50} $bottom={18}>
              <Fit w={186} skew={8}>Update setting</Fit>
              <Fit w={13} ml={7} skew={8}>-</Fit>
              <Fit w={92} ml={5} skew={8} color="#f00">Disable</Fit>
            </Caption>
            <FirewallWindow />
            <Caption $top={13} $left={64}>
              <Fit w={195} skew={8}>Firewall setting</Fit>
              <Fit w={13} ml={7} skew={8}>-</Fit>
              <Fit w={92} ml={5} skew={8} color="#f00">Disable</Fit>
            </Caption>
          </RightColumn>
        </Content>
      </Slide>
    </>
  );
}
